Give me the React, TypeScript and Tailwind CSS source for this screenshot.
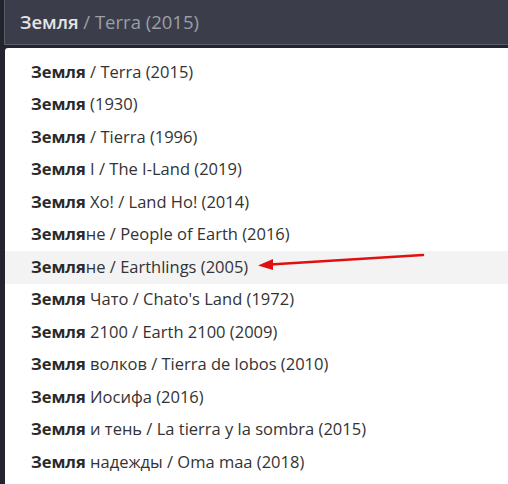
import React from "react";

const items: [string, string][] = [
  ["Земля", " / Terra (2015)"],
  ["Земля", " (1930)"],
  ["Земля", " / Tierra (1996)"],
  ["Земля", " I / The I-Land (2019)"],
  ["Земля", " Хо! / Land Ho! (2014)"],
  ["Земля", "не / People of Earth (2016)"],
  ["Земля", "не / Earthlings (2005)"],
  ["Земля", " Чато / Chato's Land (1972)"],
  ["Земля", " 2100 / Earth 2100 (2009)"],
  ["Земля", " волков / Tierra de lobos (2010)"],
  ["Земля", " Иосифа (2016)"],
  ["Земля", " и тень / La tierra y la sombra (2015)"],
  ["Земля", " надежды / Oma maa (2018)"],
];

export default function App() {
  return (
    <div
      className="relative w-[508px] h-[484px] overflow-hidden bg-[#23242d]"
      style={{ fontFamily: '"Open Sans", "Noto Sans", sans-serif' }}
    >
      <div className="ml-[4px] h-[45px] bg-[#3b3e4a] border-l border-b border-[#5b5e6a] flex items-center pl-[15px] text-[18.5px]">
        <span className="font-semibold text-[#e4e5e8]">Земля</span>
        <span className="text-[#9c9ea6] whitespace-pre"> / Terra (2015)</span>
      </div>
      <div className="mt-[3px] ml-[5px] bg-white rounded-tl-[3px] pt-[8px] h-[436px]">
        {items.map(([b, r], i) => (
          <div
            key={i}
            className={
              "h-[32.5px] flex items-center pl-[26px] text-[16.5px] text-[#333333] whitespace-pre " +
              (i === 6 ? "bg-[#f3f3f3]" : "")
            }
          >
            <span className="font-bold text-[#2a2a2a]">{b}</span>
            <span>{r}</span>
          </div>
        ))}
      </div>
      <svg
        className="absolute left-0 top-0 pointer-events-none"
        width="508"
        height="484"
        viewBox="0 0 508 484"
      >
        <line x1="423" y1="255" x2="270" y2="264.5" stroke="#e01010" strokeWidth="2.5" strokeLinecap="round" />
        <polygon points="258,265.5 273,259 273,270" fill="#e01010" />
      </svg>
    </div>
  );
}
